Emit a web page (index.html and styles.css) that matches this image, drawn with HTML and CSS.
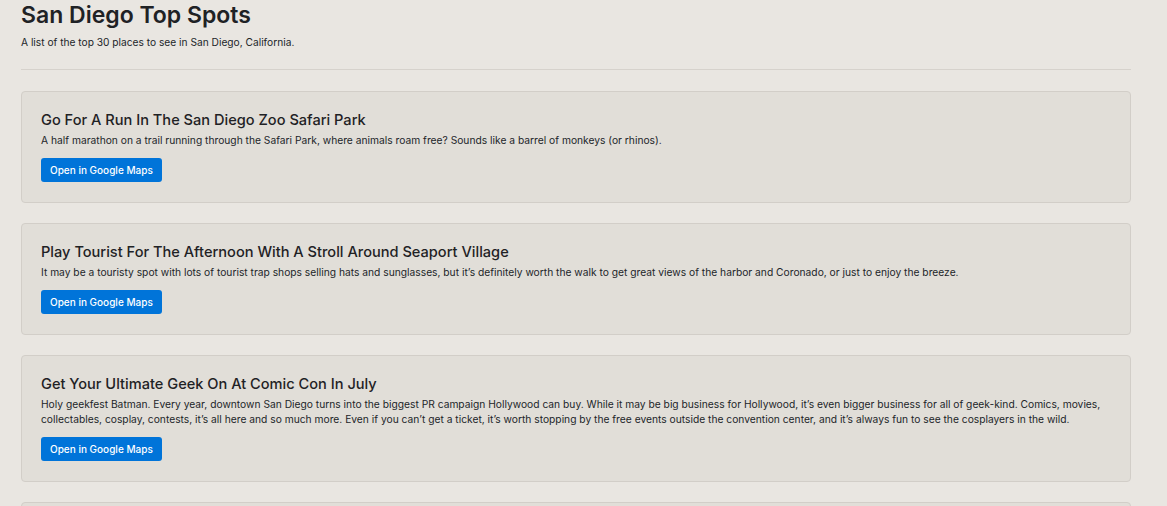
FILE: index.html
```html
<!DOCTYPE html>
<html lang="en">
<head>
<meta charset="utf-8">
<title>San Diego Top Spots</title>
<link rel="stylesheet" href="styles.css">
</head>
<body>
<main class="container">
  <header class="page-header">
    <h1 class="page-title">San Diego Top Spots</h1>
    <p class="page-lead">A list of the top 30 places to see in San Diego, California.</p>
  </header>
  <hr class="divider">
  <section class="spots">
    <article class="spot">
      <h2 class="spot-title">Go For A Run In The San Diego Zoo Safari Park</h2>
      <p class="spot-desc">A half marathon on a trail running through the Safari Park, where animals roam free? Sounds like a barrel of monkeys (or rhinos).</p>
      <a class="btn" href="#">Open in Google Maps</a>
    </article>
    <article class="spot">
      <h2 class="spot-title">Play Tourist For The Afternoon With A Stroll Around Seaport Village</h2>
      <p class="spot-desc">It may be a touristy spot with lots of tourist trap shops selling hats and sunglasses, but it’s definitely worth the walk to get great views of the harbor and Coronado, or just to enjoy the breeze.</p>
      <a class="btn" href="#">Open in Google Maps</a>
    </article>
    <article class="spot">
      <h2 class="spot-title">Get Your Ultimate Geek On At Comic Con In July</h2>
      <p class="spot-desc">Holy geekfest Batman. Every year, downtown San Diego turns into the biggest PR campaign Hollywood can buy. While it may be big business for Hollywood, it’s even bigger business for all of geek-kind. Comics, movies, collectables, cosplay, contests, it’s all here and so much more. Even if you can’t get a ticket, it’s worth stopping by the free events outside the convention center, and it’s always fun to see the cosplayers in the wild.</p>
      <a class="btn" href="#">Open in Google Maps</a>
    </article>
    <article class="spot">
      <h2 class="spot-title">Take A Sunset Stroll Along The Beach In La Jolla</h2>
      <p class="spot-desc">Watch the sun go down over the Pacific.</p>
      <a class="btn" href="#">Open in Google Maps</a>
    </article>
  </section>
</main>
</body>
</html>
```

FILE: styles.css
```css
html, body {
  margin: 0;
  padding: 0;
}
body {
  background: #e9e6e1;
  color: #212529;
  font-family: Inter, "Liberation Sans", Arial, sans-serif;
  font-size: 10px;
  line-height: 1.5;
}
.container {
  width: 1110px;
  padding: 0 0 0 21px;
}
.page-title {
  margin: 0;
  font-size: 23px;
  font-weight: 600;
  line-height: 31px;
  color: #1f2225;
}
.page-lead {
  margin: 4px 0 0;
  font-size: 10.2px;
  line-height: 15px;
}
.divider {
  margin: 19px 0 21px;
  border: 0;
  border-top: 1px solid #d6d2cc;
  height: 0;
}
.spots {
  display: flex;
  flex-direction: column;
  gap: 20px;
}
.spot {
  background: #e1ded8;
  border: 1px solid #d2cec8;
  border-radius: 4px;
  padding: 19px 19px 20px;
}
.spot-title {
  margin: 0;
  font-size: 14.6px;
  font-weight: 500;
  line-height: 19px;
  color: #1f2225;
}
.spot-desc {
  margin: 3px 0 10px;
  font-size: 10.25px;
  line-height: 15px;
}
.btn {
  display: inline-flex;
  align-items: center;
  height: 24px;
  box-sizing: border-box;
  padding: 0 9px;
  background: #0074d9;
  color: #fff;
  border-radius: 3px;
  font-size: 10px;
  font-weight: 500;
  text-decoration: none;
}
```
